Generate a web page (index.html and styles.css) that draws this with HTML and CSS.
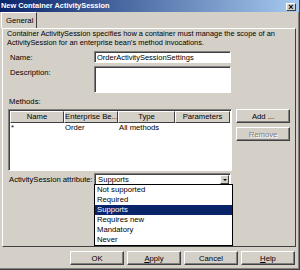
FILE: index.html
```html
<!DOCTYPE html>
<html lang="en">
<head>
    <meta charset="UTF-8">
    <title>New Container ActivitySession</title>
    <link rel="stylesheet" href="styles.css">
</head>
<body>
    <div class="window">
        <div class="titlebar">
            <span class="title">New Container ActivitySession</span>
            <span class="close-btn">&#215;</span>
        </div>

        <div class="tabs">
            <div class="tab">General</div>
        </div>

        <div class="panel">
            <p class="intro">Container ActivitySession specifies how a container must manage the scope of an ActivitySession for an enterprise bean's method invocations.</p>

            <div class="field-row name-row">
                <label class="field-label">Name:</label>
                <div class="textbox">OrderActivitySessionSettings</div>
            </div>
            <div class="field-row desc-row">
                <label class="field-label">Description:</label>
                <div class="textbox textarea"></div>
            </div>

            <div class="methods-label">Methods:</div>
            <div class="methods-row">
                <div class="grid">
                    <div class="grid-head">
                        <div class="col">Name</div>
                        <div class="col">Enterprise Be...</div>
                        <div class="col">Type</div>
                        <div class="col">Parameters</div>
                    </div>
                    <div class="grid-row">
                        <div class="cell">*</div>
                        <div class="cell">Order</div>
                        <div class="cell">All methods</div>
                        <div class="cell"></div>
                    </div>
                </div>
                <div class="side-buttons">
                    <button class="btn">Add ...</button>
                    <button class="btn disabled">Remove</button>
                </div>
            </div>

            <div class="field-row attr-row">
                <label class="field-label">ActivitySession attribute:</label>
                <div class="combo">
                    <span class="combo-value">Supports</span>
                    <span class="combo-arrow"></span>
                    <ul class="dropdown">
                        <li>Not supported</li>
                        <li>Required</li>
                        <li class="selected">Supports</li>
                        <li>Requires new</li>
                        <li>Mandatory</li>
                        <li>Never</li>
                    </ul>
                </div>
            </div>
        </div>

        <div class="footer">
            <button class="btn">OK</button>
            <button class="btn"><u>A</u>pply</button>
            <button class="btn">Cancel</button>
            <button class="btn"><u>H</u>elp</button>
        </div>
    </div>
</body>
</html>
```

FILE: styles.css
```css
* {
    box-sizing: border-box;
}
body {
    margin: 0;
    font-family: "Liberation Sans", Arial, sans-serif;
    font-size: 7.5px;
    line-height: 9px;
    color: #000;
    background: #d4d0c8;
}
.window {
    width: 300px;
    height: 270px;
    background: #d4d0c8;
    border-right: 1px solid #404040;
    border-bottom: 1px solid #404040;
    box-shadow: inset -1px -1px 0 #808080;
    display: flex;
    flex-direction: column;
}
.titlebar {
    height: 12px;
    flex: none;
    background: linear-gradient(to right, #0a246a, #a6caf0);
    display: flex;
    align-items: center;
    justify-content: space-between;
    padding: 0 3px 0 1px;
}
.title {
    color: #fff;
    font-weight: bold;
    font-size: 7.4px;
    line-height: 12px;
}
.close-btn {
    width: 10px;
    height: 8px;
    margin-top: 2px;
    background: #d4d0c8;
    border: 1px solid;
    border-color: #fff #404040 #404040 #fff;
    font-size: 9px;
    font-weight: bold;
    line-height: 6px;
    text-align: center;
}
.tabs {
    display: flex;
    flex: none;
    height: 16px;
    padding-left: 1px;
}
.tab {
    width: 36px;
    height: 16px;
    border: 1px solid;
    border-color: #fff #404040 transparent #fff;
    border-bottom: none;
    padding: 3px 0 0 4px;
    font-size: 7.7px;
}
.panel {
    position: relative;
    flex: none;
    margin: 0 3px 0 2px;
    height: 219px;
    border: 1px solid;
    border-color: #fff #404040 #404040 #fff;
    padding: 0 4px 0 5px;
}
.intro {
    margin: 0 0 0 -1px;
    font-size: 7.4px;
}
.field-row {
    display: flex;
    align-items: flex-start;
}
.name-row {
    margin-top: 4px;
}
.desc-row {
    margin-top: 3px;
}
.field-label {
    width: 86px;
    padding: 2px 0 0 2px;
    font-size: 7.7px;
}
.textbox {
    width: 137px;
    height: 12px;
    background: #fff;
    border: 1px solid;
    border-color: #808080 #fff #fff #808080;
    box-shadow: inset 1px 1px 0 #404040;
    padding: 1px 0 0 2px;
    font-size: 7.5px;
}
.textarea {
    height: 27px;
}
.methods-label {
    margin-top: 4px;
    padding-left: 1px;
    font-size: 7.7px;
}
.methods-row {
    display: flex;
    gap: 4px;
    margin-top: 3px;
}
.grid {
    width: 224px;
    height: 62px;
    background: #fff;
    border: 1px solid;
    border-color: #808080 #fff #fff #808080;
    box-shadow: inset 1px 1px 0 #404040;
    padding: 1px 0 0 1px;
}
.grid-head, .grid-row {
    display: grid;
    grid-template-columns: 54px 54px 57px 55px;
}
.grid-head .col {
    height: 12px;
    background: #d4d0c8;
    border: 1px solid;
    border-color: #fff #404040 #404040 #fff;
    text-align: center;
    font-size: 7.7px;
    line-height: 10px;
    white-space: nowrap;
    overflow: hidden;
}
.grid-row .cell {
    padding: 0 0 0 1px;
    font-size: 7.7px;
    line-height: 9px;
    white-space: nowrap;
}
.side-buttons {
    display: flex;
    flex-direction: column;
    gap: 4px;
}
.btn {
    width: 54px;
    height: 14px;
    padding: 0;
    background: #d4d0c8;
    border: 1px solid;
    border-color: #fff #404040 #404040 #fff;
    box-shadow: inset -1px -1px 0 #808080;
    font-family: inherit;
    font-size: 7.7px;
    line-height: 11px;
    color: #000;
}
.btn.disabled {
    color: #808080;
    text-shadow: 1px 1px 0 #fff;
}
.attr-row {
    margin-top: 2px;
}
.attr-row .field-label {
    padding-left: 1px;
}
.combo {
    position: relative;
    width: 137px;
    height: 12px;
    background: #fff;
    border: 1px solid;
    border-color: #808080 #fff #fff #808080;
    box-shadow: inset 1px 1px 0 #404040;
    display: flex;
    justify-content: space-between;
    padding: 1px 1px 1px 3px;
}
.combo-value {
    font-size: 7.7px;
    line-height: 9px;
}
.combo-arrow {
    position: relative;
    width: 9px;
    height: 9px;
    background: #d4d0c8;
    border: 1px solid;
    border-color: #fff #404040 #404040 #fff;
}
.combo-arrow::after {
    content: "";
    position: absolute;
    left: 1.5px;
    top: 3px;
    border: 2px solid transparent;
    border-top: 2px solid #000;
    border-bottom: none;
}
.dropdown {
    position: absolute;
    left: -1px;
    top: 10px;
    width: 139px;
    margin: 0;
    padding: 0;
    list-style: none;
    background: #fff;
    border: 1px solid #000;
    z-index: 2;
}
.dropdown li {
    height: 10px;
    padding-left: 2px;
    font-size: 7.7px;
    line-height: 10px;
}
.dropdown li.selected {
    background: #0a246a;
    color: #fff;
}
.footer {
    display: flex;
    justify-content: flex-end;
    gap: 3px;
    padding: 4px 4px 0 0;
}
```
